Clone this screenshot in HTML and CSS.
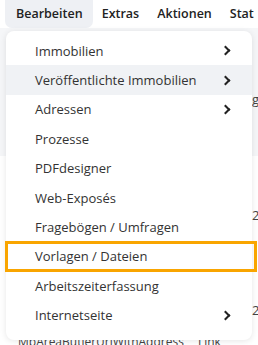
FILE: index.html
```html
<!DOCTYPE html>
<html lang="de">

<head>
    <meta charset="UTF-8">
    <meta name="viewport" content="width=device-width, initial-scale=1.0">
    <title>Bearbeiten</title>
    <link rel="stylesheet" href="styles.css">
</head>

<body>
    <div class="topbar">
        <span class="tab active">Bearbeiten</span>
        <span class="tab">Extras</span>
        <span class="tab">Aktionen</span>
        <span class="tab">Stat</span>
    </div>

    <!-- page content behind the dropdown -->
    <div class="page">
        <div class="page-row">g</div>
        <div class="page-row">2</div>
        <div class="page-row">2</div>
        <div class="page-row bottom"><span>MbAreaButlerUrlWithAddress</span><span>Link</span></div>
    </div>

    <div class="menu">
        <div class="menu-item">Immobilien<span class="chevron"></span></div>
        <div class="menu-item hover">Veröffentlichte Immobilien<span class="chevron"></span></div>
        <div class="menu-item">Adressen<span class="chevron"></span></div>
        <div class="menu-item">Prozesse</div>
        <div class="menu-item">PDFdesigner</div>
        <div class="menu-item">Web-Exposés</div>
        <div class="menu-item">Fragebögen / Umfragen</div>
        <div class="menu-item selected">Vorlagen / Dateien</div>
        <div class="menu-item">Arbeitszeiterfassung</div>
        <div class="menu-item">Internetseite<span class="chevron"></span></div>
    </div>
</body>

</html>
```

FILE: styles.css
```css
body {
    margin: 0;
    background-color: #fff;
    font-family: 'Open Sans', 'Noto Sans', sans-serif;
    color: #333;
    overflow: hidden;
    position: relative;
    height: 345px;
}

.topbar {
    display: flex;
    align-items: center;
    height: 28px;
    padding-left: 5px;
    white-space: nowrap;
    overflow: hidden;
}

.tab {
    font-size: 12.5px;
    font-weight: 600;
    color: #222;
    padding: 0 9px;
    height: 28px;
    line-height: 27px;
}

.tab.active {
    background-color: #eef0f4;
    border-radius: 0 0 7px 7px;
    padding: 0 10px 0 11px;
}

.page {
    position: absolute;
    top: 28px;
    left: 0;
    width: 258px;
    height: 317px;
    background: linear-gradient(#f5f6f8 0, #f5f6f8 128px, #fff 128px);
    overflow: hidden;
}

.page-row {
    position: absolute;
    left: 252px;
    font-size: 13px;
    color: #444;
}

.page-row:nth-child(1) {
    top: 62px;
}

.page-row:nth-child(2) {
    top: 178px;
}

.page-row:nth-child(3) {
    top: 273px;
}

.page-row.bottom {
    left: 18px;
    top: 305px;
    display: flex;
    gap: 14px;
    font-size: 12px;
    white-space: nowrap;
}

.menu {
    position: absolute;
    top: 31px;
    left: 6px;
    width: 246px;
    padding: 5px 0 10px;
    background-color: #fff;
    border-radius: 8px;
    box-shadow: 0 1px 6px rgba(0, 0, 0, 0.1);
}

.menu-item {
    display: flex;
    align-items: center;
    justify-content: space-between;
    height: 29.4px;
    padding: 0 23px 0 29px;
    font-size: 13px;
    color: #333;
    box-sizing: border-box;
}

.menu-item.hover {
    background-color: #f0f2f5;
}

.menu-item.selected {
    outline: 3px solid #f9a500;
    outline-offset: -2px;
    margin-right: -4px;
    padding-right: 27px;
}

.chevron {
    width: 5px;
    height: 5px;
    border-right: 2px solid #222;
    border-top: 2px solid #222;
    transform: rotate(45deg);
}
```
